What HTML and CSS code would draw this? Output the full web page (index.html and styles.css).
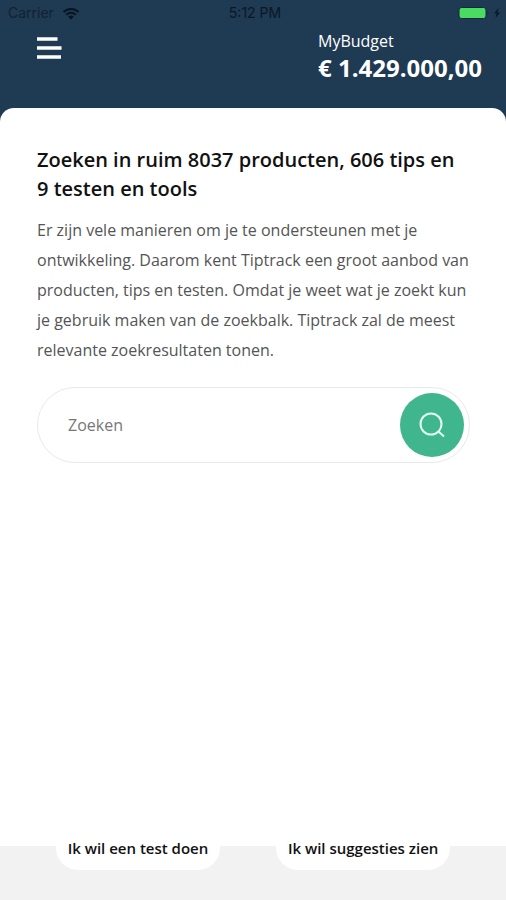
FILE: index.html
```html
<!DOCTYPE html>
<html lang="nl">
<head>
<meta charset="utf-8">
<meta name="viewport" content="width=device-width, initial-scale=1">
<title>Zoeken</title>
<link rel="stylesheet" href="styles.css">
</head>
<body>
<div class="status">
  <span class="carrier">Carrier
    <svg width="18" height="13" viewBox="0 0 18 13" fill="none" stroke="#081420" stroke-width="2"><path d="M1.500 5a10.600 10.600 0 0 1 15 0M4.300 7.800a6.700 6.700 0 0 1 9.400 0"/><path d="M9 12.500 6.300 9.800a3.800 3.800 0 0 1 5.400 0z" fill="#081420" stroke="none"/></svg>
  </span>
  <time class="clock">5:12 PM</time>
  <svg class="battery" width="44" height="14" viewBox="0 0 44 14"><rect x="1" y="1.500" width="27" height="11" rx="2.500" fill="#4bdb63" stroke="#14283c"/><path d="M29.500 5v4q2-2 0-4" fill="#14283c"/><path d="M40.500 2 36 7.600h2.600L37.500 12l4.500-5.600h-2.600z" fill="#0b1824"/></svg>
</div>
<header class="header">
  <button class="menu" type="button" aria-label="Menu">
    <svg width="26" height="22" viewBox="0 0 26 22" stroke="#fff" stroke-width="3.500"><path d="M1 2h20.500M1 11h24.500M1 20h24"/></svg>
  </button>
  <div class="budget">
    <span class="budget-label">MyBudget</span>
    <strong class="budget-amount">€ 1.429.000,00</strong>
  </div>
</header>
<main class="sheet">
  <h1>Zoeken in ruim 8037 producten, 606 tips en 9 testen en tools</h1>
  <p>Er zijn vele manieren om je te ondersteunen met je ontwikkeling. Daarom kent Tiptrack een groot aanbod van producten, tips en testen. Omdat je weet wat je zoekt kun je gebruik maken van de zoekbalk. Tiptrack zal de meest relevante zoekresultaten tonen.</p>
  <form class="search" role="search">
    <input type="search" placeholder="Zoeken" aria-label="Zoeken">
    <button class="go" type="button" aria-label="Zoek">
      <svg width="26" height="26" viewBox="0 0 26 26" fill="none" stroke="#e4fff4" stroke-width="2"><circle cx="12" cy="12" r="10.500"/><path d="m19.500 19.500 5.500 5"/></svg>
    </button>
  </form>
</main>
<footer class="actions">
  <button type="button">Ik wil een test doen</button>
  <button type="button">Ik wil suggesties zien</button>
</footer>
</body>
</html>
```
FILE: styles.css
```css
* {
  box-sizing: border-box;
}

body {
  margin: 0;
  min-height: 100vh;
  display: flex;
  flex-direction: column;
  background: linear-gradient(#1f3a53 50%, #f2f2f2 50%);
  color: #111;
  font-family: "Open Sans", sans-serif;
}

button,
input {
  font: inherit;
  border: 0;
  padding: 0;
}

.status {
  display: grid;
  grid-template-columns: 1fr auto 1fr;
  align-items: center;
  height: 26px;
  padding: 0 4px 0 8px;
  color: #0b1824;
  font: 14px/16px Inter, sans-serif;
}

.carrier {
  display: flex;
  align-items: center;
  gap: 8px;
  color: #12222f;
}

.battery {
  justify-self: end;
}

.header {
  display: flex;
  justify-content: space-between;
  align-items: flex-start;
  padding: 4px 24px 24px 36px;
}

.menu {
  display: flex;
  margin-top: 7px;
  background: none;
}

.budget {
  display: flex;
  flex-direction: column;
  color: #fff;
}

.budget-label {
  font-size: 16px;
  line-height: 22px;
}

.budget-amount {
  font-size: 24px;
  line-height: 32px;
  font-weight: 700;
}

.sheet {
  flex: 1;
  padding: 37px 36px 32px 37px;
  background: #fff;
  border-radius: 14px 14px 0 0;
}

h1 {
  margin: 0 0 12px;
  font-size: 20px;
  line-height: 29px;
  font-weight: 600;
}

p {
  margin: 0 0 22px;
  color: #555;
  font-size: 16px;
  line-height: 30px;
}

.search {
  display: flex;
  align-items: center;
  height: 76px;
  padding: 0 5px 0 30px;
  border: 1px solid #e9e9e9;
  border-radius: 38px;
}

.search input {
  flex: 1;
  min-width: 0;
  background: none;
  font-size: 16px;
}

.search input::placeholder {
  color: #777;
}

.go {
  display: grid;
  place-items: center;
  width: 64px;
  height: 64px;
  border-radius: 50%;
  background: #3fb68e;
}

.actions {
  display: flex;
  justify-content: space-evenly;
  align-items: flex-start;
  height: 54px;
  background: #f2f2f2;
}

.actions button {
  height: 44px;
  margin-top: -20px;
  padding: 0 12px;
  border-radius: 22px;
  background: #fff;
  color: #111;
  font-size: 15px;
  font-weight: 600;
}
```
